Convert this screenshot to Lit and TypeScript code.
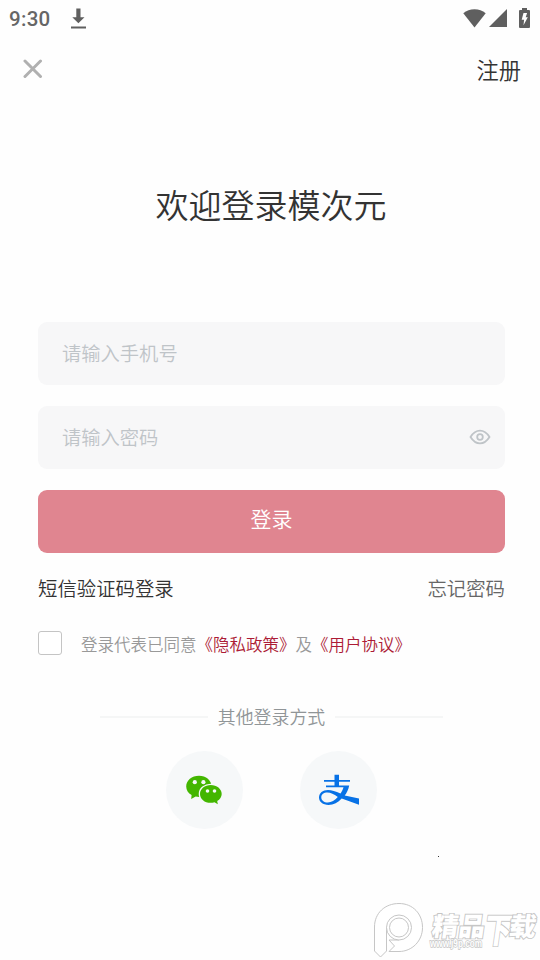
import { LitElement, html, css, svg } from "lit";
import { customElement, property } from "lit/decorators.js";

const eye = svg`<svg class="eye" width="22" height="16" viewBox="0 0 22 16" fill="none" stroke="#bfc4c8" stroke-width="1.8"><path d="M1.500 8C4.200 3.700 7.300 1.600 11 1.600S17.800 3.700 20.500 8C17.800 12.300 14.700 14.400 11 14.400S4.200 12.300 1.500 8Z"/><circle cx="11" cy="8" r="2.800"/></svg>`;

@customElement("status-bar")
export class StatusBar extends LitElement {
  static styles = css`
    :host { display: flex; height: 38px; padding: 0 10px 0 9px; box-sizing: border-box; align-items: center; color: #666; }
    .time { font: 500 20.500px/38px Roboto, sans-serif; letter-spacing: 0.3px; width: 61px; }
    svg { display: block; fill: #5f5f5f; }
    .right { margin-left: auto; margin-top: -2px; display: flex; align-items: center; }
    .signal { margin-left: 3px; }
    .battery { margin-left: 12px; }
  `;
  render() {
    return html`
      <span class="time">9:30</span>
      <svg width="17" height="22" viewBox="0 0 17 22"><path d="M6.300 .5h4.200v8.800h4L8.400 15.300 2.300 9.300h4zM1 18.600h15v2H1z"/></svg>
      <div class="right">
        <svg width="23" height="19" viewBox="0 0 23 19"><path d="M.3 4.200C3.500 1.500 7.200.2 11.500.2S19.500 1.500 22.700 4.200L11.500 18.600z"/></svg>
        <svg class="signal" width="18" height="18" viewBox="0 0 18 18"><path d="M18 0v18H0z"/></svg>
        <svg class="battery" width="11" height="20" viewBox="0 0 11 20"><path d="M3 0h5v2h2q1 0 1 1v16q0 1-1 1H1q-1 0-1-1V3q0-1 1-1h2z"/><path fill="#fff" d="M4.500 5h3.600L6.700 9.200h2.100L4.500 17.300l.6-5.500H2.700z"/></svg>
      </div>
    `;
  }
}

@customElement("input-field")
export class InputField extends LitElement {
  @property() label = "";
  @property({ type: Boolean }) secret = false;
  static styles = css`
    :host { display: flex; align-items: center; justify-content: space-between; height: 63px; box-sizing: border-box; padding: 0 14px 1px 24px; border-radius: 9px; background: #f7f7f8; color: #bfc4c8; font-size: 19.300px; }
    .eye { display: block; }
  `;
  render() {
    return html`<span>${this.label}</span>${this.secret ? eye : ""}`;
  }
}

@customElement("site-mark")
export class SiteMark extends LitElement {
  static styles = css`
    :host { position: absolute; left: 372px; top: 900px; width: 168px; height: 60px; }
    svg { display: block; fill: #fff; stroke: #c6c6c6; }
    .name { font: 900 26px "Noto Sans CJK SC", sans-serif; stroke-width: 1.800px; paint-order: stroke; }
    .big { font-size: 35px; }
    .url { font: 700 10px "Liberation Sans", sans-serif; stroke-width: 1.400px; paint-order: stroke; }
  `;
  render() {
    return html`<svg width="168" height="60" viewBox="0 0 168 60">
      <path stroke-width="1" d="M2.500 51V27C2.500 13 13 3.500 27 3.500S50.500 14 50.500 27.500 40 51.500 27 51.500H17L22.500 46 17 40H27M14.500 27V51L8.500 57 2.500 51"/>
      <circle cx="27" cy="27.500" r="12.500"/><circle cx="27" cy="27.500" r="9.500"/>
      <g transform="translate(59 36) skewX(-8)"><text class="name" textLength="53" lengthAdjust="spacingAndGlyphs">精品</text></g>
      <g transform="translate(111 43) skewX(-8)"><text class="name big" textLength="27" lengthAdjust="spacingAndGlyphs">下</text></g>
      <g transform="translate(136 36) skewX(-8)"><text class="name" textLength="27" lengthAdjust="spacingAndGlyphs">载</text></g>
      <text class="url" x="58" y="47" textLength="52" lengthAdjust="spacingAndGlyphs">www.j9p.com</text>
    </svg>`;
  }
}

@customElement("app-root")
export class AppRoot extends LitElement {
  static styles = css`
    :host { display: block; position: relative; width: 540px; height: 960px; overflow: hidden; background: #fefefe; color: #333; font-family: "Noto Sans CJK SC", sans-serif; font-weight: 350; white-space: nowrap; }
    svg { display: block; }
    .nav { display: flex; justify-content: space-between; align-items: center; height: 62px; padding: 0 19px 0 23px; font-size: 22.300px; }
    h1 { margin: 79px 0 93px 2px; font-size: 33px; line-height: 50px; font-weight: inherit; text-align: center; }
    .form { margin: 0 35px 0 38px; display: flex; flex-direction: column; gap: 21px; }
    .login { display: block; height: 63px; padding: 0 0 8px; border: 0; border-radius: 9px; background: #e08590; color: #fff; font: inherit; font-size: 21px; }
    .links { display: flex; justify-content: space-between; margin: 21px 35px 0 38px; font-size: 19.400px; line-height: 28px; }
    .forgot { color: #666; }
    .agree { display: flex; align-items: center; margin: 29px 0 0 38px; height: 24px; font-size: 16.500px; color: #999; }
    .box { box-sizing: border-box; width: 24px; height: 24px; margin-right: 19px; border: 1px solid #c4c4c4; border-radius: 3px; background: #fff; }
    .terms { padding-top: 2px; }
    .link { color: #ac1b35; }
    .divider { display: flex; align-items: center; gap: 10px; margin: 48px 97px 0 100px; height: 28px; color: #909597; font-size: 17.900px; }
    .divider span { margin-top: -2px; }
    .divider::before, .divider::after { content: ""; flex: 1; height: 2px; margin-top: -1px; background: #f5f6f6; }
    .social { display: flex; gap: 57px; margin: 20px 0 0 166px; }
    .circle { width: 77px; height: 78px; border-radius: 50%; background: #f6f8f9; display: flex; align-items: center; justify-content: center; }
    .wechat { margin-right: 1px; }
    .dot { position: absolute; left: 438px; top: 856px; width: 1px; height: 1px; background: #333; }
  `;
  render() {
    return html`
      <status-bar></status-bar>
      <div class="nav">
        <svg width="20" height="20" viewBox="0 0 20 20" stroke="#b0b0b0" stroke-width="3" stroke-linecap="round"><path d="M2 2l15.500 15.500M17.500 2L2 17.500"/></svg>
        <span>注册</span>
      </div>
      <h1>欢迎登录模次元</h1>
      <div class="form">
        <input-field label="请输入手机号"></input-field>
        <input-field label="请输入密码" secret></input-field>
        <button class="login">登录</button>
      </div>
      <div class="links"><span>短信验证码登录</span><span class="forgot">忘记密码</span></div>
      <div class="agree"><span class="box"></span><span class="terms">登录代表已同意<span class="link">《隐私政策》</span>及<span class="link">《用户协议》</span></span></div>
      <div class="divider"><span>其他登录方式</span></div>
      <div class="social">
        <div class="circle">
          <svg class="wechat" width="36" height="30" viewBox="0 0 36 30">
            <path fill="#43b600" d="M13 .8C5.800.8.2 5.500.2 11.500c0 3.600 2 6.600 5.400 8.600L5.200 24l4.500-2.400c1.200.3 2.300.4 3.500.4C20 22 25.500 17.500 25.500 11.500S20 .8 13 .8z"/>
            <path fill="#43b600" stroke="#f6f8f9" stroke-width="2.600" paint-order="stroke" d="M24.700 10C18.800 10 14 13.900 14 18.900s4.600 8.900 10.500 8.900c1.400 0 2.800-.2 4-.6l3.300 2-.6-3.200c2.700-1.600 4.500-4.200 4.500-7.100C35.700 13.900 30.800 10 24.700 10z"/>
            <g fill="#f6f8f9"><circle cx="8.800" cy="7.200" r="2.100"/><circle cx="17.400" cy="7.200" r="2.100"/><circle cx="21.500" cy="16" r="1.800"/><circle cx="28.500" cy="16" r="1.800"/></g>
          </svg>
        </div>
        <div class="circle">
          <svg width="42" height="32" viewBox="0 0 42 32">
            <path fill="#0872e6" d="M16.500.8H21V6h11v1.800H21v3.600h10.200c-.8 4-2.400 7.400-4.500 10.200L41 24.500v6.300L23.700 24.600C20 28.700 15.700 31 10.500 31 4.800 31 1 28 1 23.600c0-4.400 3.700-7.500 9-7.500 3.600 0 7.500 1.200 12.500 3.400 1.400-1.900 2.300-3.900 3-6.300H8v-1.800h8.500V7.800H6V6h10.500zM19.800 23c-4-2.700-7-4.400-10.500-4.400-3.500 0-6 2-6 4.800 0 2.900 2.700 5 6.500 5 3.600 0 7-2 10-5.400z"/>
          </svg>
        </div>
      </div>
      <span class="dot"></span>
      <site-mark></site-mark>
    `;
  }
}
